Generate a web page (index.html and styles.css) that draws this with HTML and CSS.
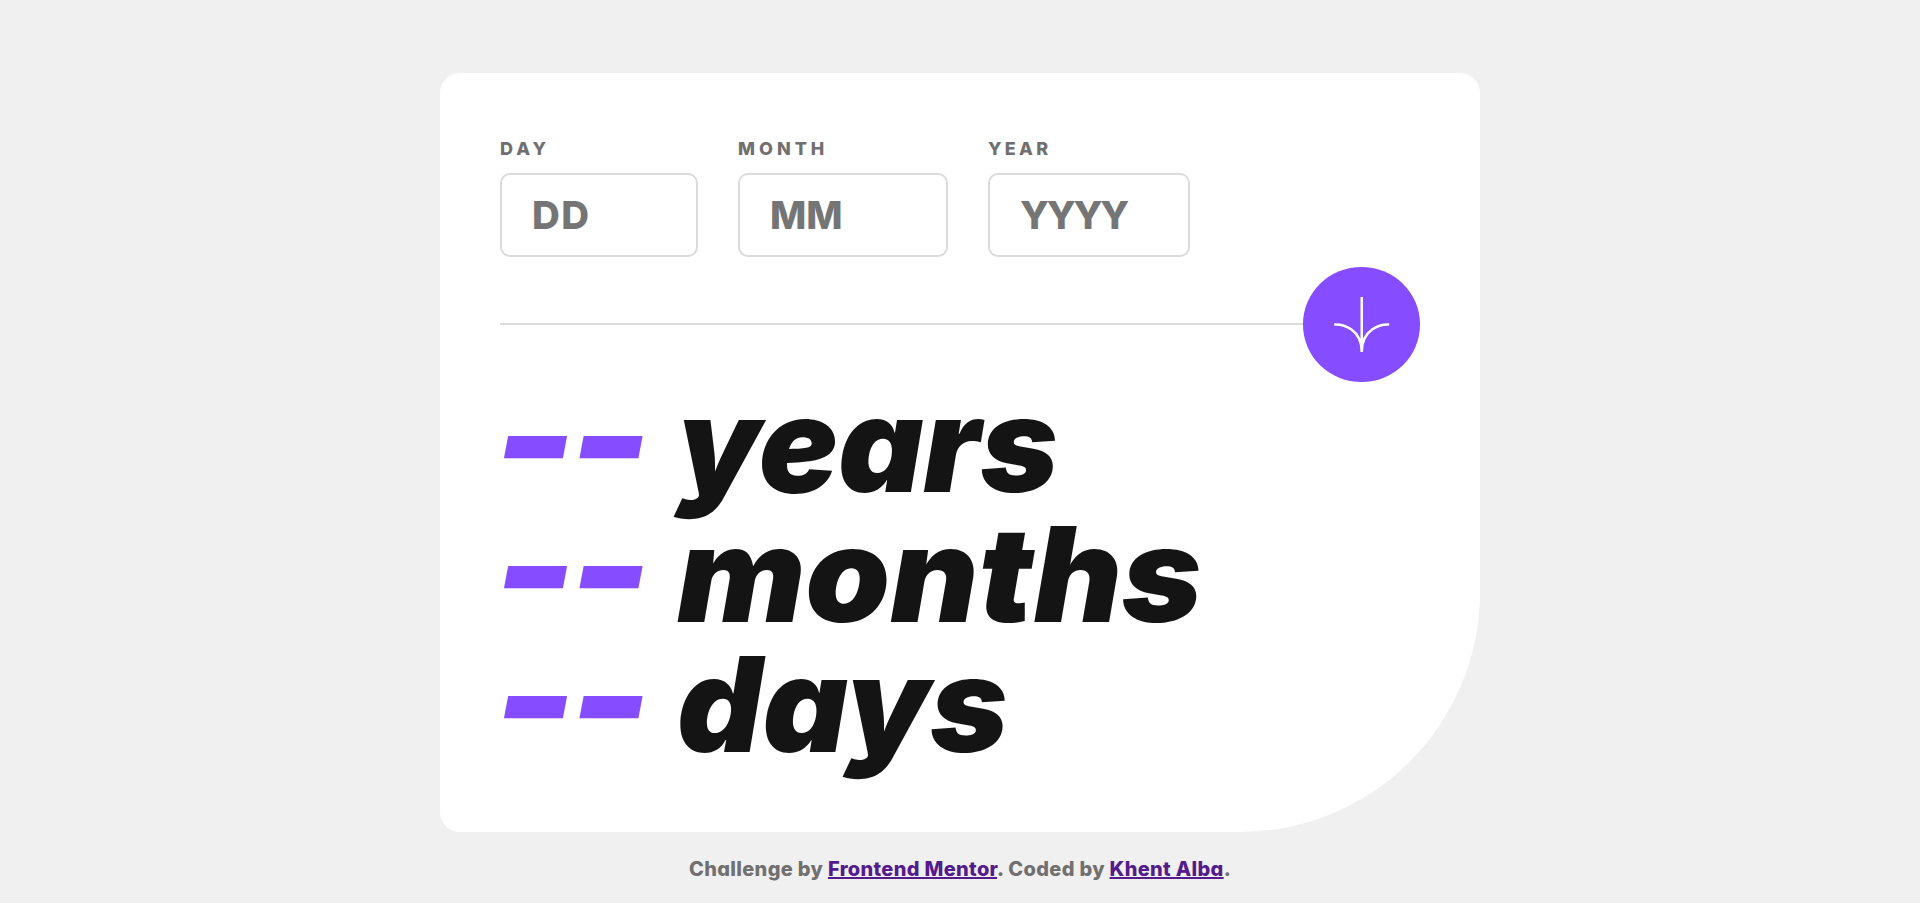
FILE: index.html
```
<!DOCTYPE html>
<html lang="en">
<head>
<meta charset="utf-8">
<title>Age calculator app</title>
<link rel="stylesheet" href="styles.css">
</head>
<body>
<main class="card">
  <form class="fields">
    <div class="field field-day"><label for="day">DAY</label><input id="day" placeholder="DD"></div>
    <div class="field field-month"><label for="month">MONTH</label><input id="month" placeholder="MM"></div>
    <div class="field field-year"><label for="year">YEAR</label><input id="year" placeholder="YYYY"></div>
  </form>
  <div class="divider">
    <span class="line"></span>
    <button class="submit" type="button" aria-label="Calculate">
      <svg width="57.5" height="55" viewBox="0 0 46 44"><path fill="none" stroke="#fff" stroke-width="2" d="M1 22.019C8.333 21.686 23 25.616 23 44M23 44V0M45 22.019C37.667 21.686 23 25.616 23 44"/></svg>
    </button>
  </div>
  <section class="results">
    <p class="row"><span class="value">--</span><span class="unit years">years</span></p>
    <p class="row"><span class="value">--</span><span class="unit months">months</span></p>
    <p class="row"><span class="value">--</span><span class="unit days">days</span></p>
  </section>
</main>
<footer class="credit">Challenge by <a href="#">Frontend Mentor</a>. Coded by <a href="#">Khent Alba</a>.</footer>
</body>
</html>
```
FILE: styles.css
```
* { box-sizing: border-box; margin: 0; padding: 0; }
body {
  height: 903px;
  padding-top: 73px;
  overflow: hidden;
  background: #f0f0f0;
  font-family: Inter, "Open Sans", sans-serif;
  font-feature-settings: "cv11";
  display: flex;
  flex-direction: column;
  align-items: center;
}
.card {
  width: 1040px;
  height: 759px;
  padding: 60px;
  background: #fff;
  border-radius: 20px 20px 240px 20px;
}
.fields { display: flex; gap: 40px; height: 124px; }
.field { display: flex; flex-direction: column; }
.field-day { width: 198px; }
.field-month { width: 210px; }
.field-year { width: 202px; }
.field label {
  height: 40px;
  line-height: 31px;
  font-size: 18px;
  font-weight: 800;
  letter-spacing: 4px;
  color: #716f6f;
}
.field-year label { letter-spacing: 3.3px; }
.field input {
  width: 100%;
  height: 84px;
  padding: 0 30px;
  border: 2px solid #dbdbdb;
  border-radius: 10px;
  font: 800 38.5px Inter, sans-serif;
  color: #141414;
}
.field input::placeholder { color: #757575; }
.field-day input { letter-spacing: 1.5px; }
.field-year input { letter-spacing: -2.2px; }
.divider { display: flex; align-items: center; height: 115px; margin-top: 10px; }
.line { flex: 1; height: 2px; margin-bottom: 1px; background: #dbdbdb; }
.submit {
  display: flex;
  width: 117.5px;
  height: 115px;
  padding: 30px;
  border: 0;
  border-radius: 50%;
  background: #854dff;
}
.results { margin-top: -3px; }
.row {
  display: flex;
  height: 130px;
  line-height: 130px;
  font-size: 132px;
  font-weight: 900;
  font-style: italic;
  color: #141414;
  white-space: nowrap;
}
.value {
  width: 177px;
  color: #854dff;
  letter-spacing: -5px;
  transform: translate(-6px, -8px) scale(1.31, 1.14);
  transform-origin: left center;
}
.months { transform: scaleX(1.03); transform-origin: left center; }
.days { letter-spacing: .6px; }
.credit {
  padding-top: 23px;
  line-height: 28px;
  font-size: 20px;
  font-weight: 800;
  letter-spacing: .33px;
  color: #716f6f;
}
.credit a { color: #551a8b; }
```
